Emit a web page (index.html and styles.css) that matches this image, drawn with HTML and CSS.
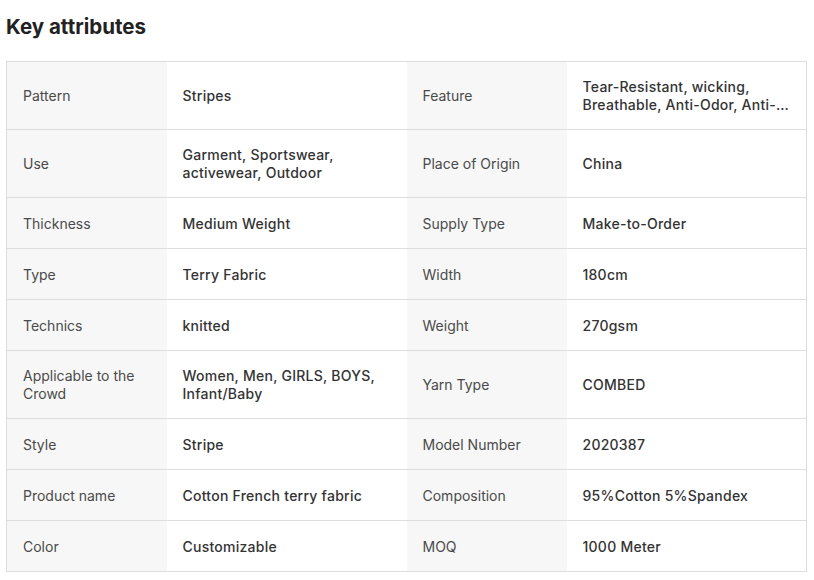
FILE: index.html
```html
<!DOCTYPE html>
<html>
<head>
<meta charset="utf-8">
<link rel="stylesheet" href="styles.css">
</head>
<body>
<div class="page">
  <h2 class="title">Key attributes</h2>
  <table class="attrs">
    <colgroup>
      <col class="c-key"><col class="c-val"><col class="c-key"><col class="c-val">
    </colgroup>
    <tr>
      <td class="key">Pattern</td><td class="val">Stripes</td>
      <td class="key">Feature</td><td class="val"><div class="clamp">Tear-Resistant, wicking, Breathable, Anti-Odor, Anti-Static, Anti-Pill</div></td>
    </tr>
    <tr>
      <td class="key">Use</td><td class="val">Garment, Sportswear, activewear, Outdoor</td>
      <td class="key">Place of Origin</td><td class="val">China</td>
    </tr>
    <tr>
      <td class="key">Thickness</td><td class="val">Medium Weight</td>
      <td class="key">Supply Type</td><td class="val">Make-to-Order</td>
    </tr>
    <tr>
      <td class="key">Type</td><td class="val">Terry Fabric</td>
      <td class="key">Width</td><td class="val">180cm</td>
    </tr>
    <tr>
      <td class="key">Technics</td><td class="val">knitted</td>
      <td class="key">Weight</td><td class="val">270gsm</td>
    </tr>
    <tr>
      <td class="key">Applicable to the Crowd</td><td class="val">Women, Men, GIRLS, BOYS, Infant/Baby</td>
      <td class="key">Yarn Type</td><td class="val">COMBED</td>
    </tr>
    <tr>
      <td class="key">Style</td><td class="val">Stripe</td>
      <td class="key">Model Number</td><td class="val">2020387</td>
    </tr>
    <tr>
      <td class="key">Product name</td><td class="val">Cotton French terry fabric</td>
      <td class="key">Composition</td><td class="val">95%Cotton 5%Spandex</td>
    </tr>
    <tr>
      <td class="key">Color</td><td class="val">Customizable</td>
      <td class="key">MOQ</td><td class="val">1000 Meter</td>
    </tr>
  </table>
</div>
</body>
</html>
```

FILE: styles.css
```css
html, body {
  margin: 0;
  padding: 0;
  background: #fff;
}
.page {
  padding: 13px 7px 0 6px;
  font-family: Inter, "Noto Sans", "Liberation Sans", sans-serif;
}
.title {
  margin: 0 0 20px 0;
  font-size: 20.5px;
  line-height: 28px;
  font-weight: 700;
  color: #222;
}
.attrs {
  width: 100%;
  border-collapse: collapse;
  table-layout: fixed;
  border: 1px solid #dddddd;
  font-size: 14px;
  line-height: 18px;
}
.c-key { width: 20%; }
.c-val { width: 30%; }
.attrs tr {
  height: 51px;
  border-bottom: 1px solid #dddddd;
}
.attrs td {
  padding: 16px 16px 15px 16px;
  vertical-align: middle;
}
.key {
  background: #f7f7f7;
  color: #4a4a4a;
}
.val {
  background: #fff;
  color: #333;
  font-weight: 500;
  letter-spacing: 0.25px;
}
.clamp {
  display: -webkit-box;
  -webkit-line-clamp: 2;
  -webkit-box-orient: vertical;
  overflow: hidden;
}
```
